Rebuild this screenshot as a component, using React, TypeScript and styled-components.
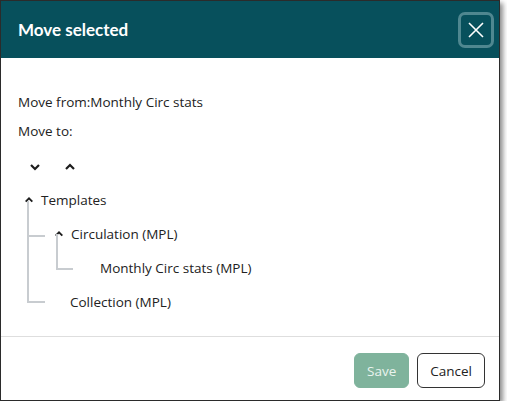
import React from 'react'
import styled, { createGlobalStyle } from 'styled-components'

const Global = createGlobalStyle`
    body {
        margin: 0;
        background: #ffffff;
        font-family: 'Open Sans', 'Noto Sans', sans-serif;
    }
`

const Dialog = styled.div`
    width: 500px;
    height: 401px;
    box-sizing: border-box;
    border: 1.5px solid #2b2b2b;
    background: #fff;
    box-shadow: 3px 3px 5px rgba(0, 0, 0, 0.45);
    display: flex;
    flex-direction: column;
`

const Header = styled.div`
    height: 57px;
    flex-shrink: 0;
    background: #07505c;
    display: flex;
    align-items: center;
    justify-content: space-between;
    padding: 0 5px 0 17px;
`

const Title = styled.h1`
    margin: 0;
    color: #fff;
    font-family: Lato, 'Open Sans', sans-serif;
    font-size: 17px;
    font-weight: 700;
`

const CloseButton = styled.button`
    width: 36px;
    height: 36px;
    border: 3px solid #4f8790;
    border-radius: 7px;
    background: transparent;
    display: flex;
    align-items: center;
    justify-content: center;
    padding: 0;
`

const Body = styled.div`
    flex: 1;
    padding: 34px 17px 0;
    color: #222;
    font-size: 13.5px;
`

const Line = styled.div`
    height: 29px;
    line-height: 20px;
`

const Arrows = styled.div`
    display: flex;
    gap: 21px;
    padding-left: 10px;
    height: 33px;
    align-items: center;
`

const ArrowBtn = styled.span`
    width: 14px;
    display: flex;
    justify-content: center;
`

const Tree = styled.div`
    position: relative;
`

const Node = styled.div<{ $indent: number }>`
    height: 34px;
    display: flex;
    align-items: center;
    padding-left: ${p => p.$indent}px;
`

const Toggle = styled.span`
    width: 16px;
    display: flex;
    justify-content: center;
    margin-right: 4px;
`

const Connector = styled.span<{ $x: number; $top: number; $h: number; $w: number }>`
    position: absolute;
    left: ${p => p.$x}px;
    top: ${p => p.$top}px;
    width: ${p => p.$w}px;
    height: ${p => p.$h}px;
    border-left: 2px solid #c8ccd0;
    border-bottom: 2px solid #c8ccd0;
`

const Footer = styled.div`
    height: 64px;
    flex-shrink: 0;
    box-sizing: border-box;
    border-top: 1px solid #dedede;
    display: flex;
    align-items: center;
    justify-content: flex-end;
    gap: 8px;
    padding: 4px 14px 0 0;
`

const Button = styled.button<{ $primary?: boolean }>`
    height: 35px;
    padding: 0 12px;
    border-radius: 6px;
    font-family: 'Open Sans', 'Noto Sans', sans-serif;
    font-size: 13.5px;
    border: 1px solid ${p => (p.$primary ? '#7fb39c' : '#333')};
    background: ${p => (p.$primary ? '#7fb39c' : '#fff')};
    color: ${p => (p.$primary ? '#eaf3ee' : '#222')};
`

const Chevron = ({ up, size = 12 }: { up?: boolean; size?: number }) => (
    <svg width={size} height={size} viewBox="0 0 12 12">
        <path
            d={up ? 'M2 8 L6 4 L10 8' : 'M2 4 L6 8 L10 4'}
            fill="none"
            stroke="#1d1d1d"
            strokeWidth="2.2"
        />
    </svg>
)

export default function App() {
    return (
        <>
            <Global />
            <Dialog>
                <Header>
                    <Title>Move selected</Title>
                    <CloseButton aria-label="Close">
                        <svg width="18" height="18" viewBox="0 0 18 18">
                            <path d="M2 2 L16 16 M16 2 L2 16" stroke="#fff" strokeWidth="1.6" />
                        </svg>
                    </CloseButton>
                </Header>
                <Body>
                    <Line>Move from:Monthly Circ stats</Line>
                    <Line>Move to:</Line>
                    <Arrows>
                        <ArrowBtn><Chevron /></ArrowBtn>
                        <ArrowBtn><Chevron up /></ArrowBtn>
                    </Arrows>
                    <Tree>
                        <Connector $x={9} $top={18} $w={16} $h={17 + 34 + 34 + 15} />
                        <Connector $x={9} $top={18} $w={16} $h={34} />
                        <Connector $x={38} $top={51} $w={15} $h={34} />
                        <Node $indent={3}>
                            <Toggle><Chevron up size={10} /></Toggle>Templates
                        </Node>
                        <Node $indent={33}>
                            <Toggle><Chevron up size={10} /></Toggle>Circulation (MPL)
                        </Node>
                        <Node $indent={82}>Monthly Circ stats (MPL)</Node>
                        <Node $indent={52}>Collection (MPL)</Node>
                    </Tree>
                </Body>
                <Footer>
                    <Button $primary>Save</Button>
                    <Button>Cancel</Button>
                </Footer>
            </Dialog>
        </>
    )
}
